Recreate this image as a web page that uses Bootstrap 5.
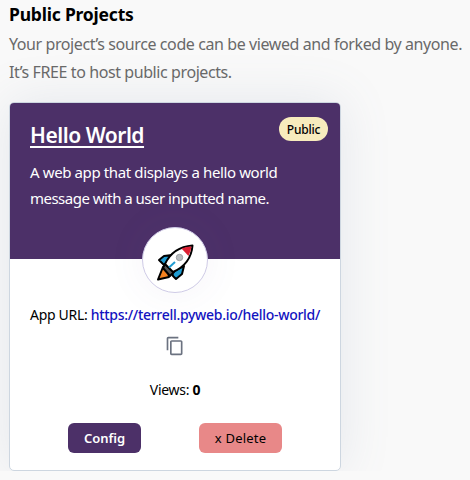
<!DOCTYPE html>
<html lang="en">
<head>
<meta charset="utf-8">
<meta name="viewport" content="width=device-width, initial-scale=1">
<title>Public Projects</title>
<link href="https://cdn.jsdelivr.net/npm/bootstrap@5.3.0/dist/css/bootstrap.min.css" rel="stylesheet">
<style>
body{font-family:"Noto Sans","Open Sans",sans-serif;background:#f9f9f9;color:#000;overflow:hidden}
.page{padding:2px 0 0 9px}
.section-title{font-size:17.5px;line-height:24px;font-weight:700;letter-spacing:-.2px}
.section-text{font-size:16px;line-height:28px;color:#696969;letter-spacing:-.41px;margin-top:4px}
.project{width:332px;height:369px;border:1px solid #cdd6e0;border-radius:5px;margin-top:16px;box-shadow:0 0 50px rgba(110,130,160,.15)}
.project-head{background:#4c3068;height:156px;border-radius:4px 4px 0 0;padding:18px 20px 0}
.project-name{font-size:21px;line-height:28px;font-weight:600;letter-spacing:-.47px;text-decoration-thickness:2px;text-underline-offset:3px}
.project-desc{font-size:15px;line-height:26px;letter-spacing:-.38px;margin-top:10px}
.tight{letter-spacing:-.52px}
.visibility{right:12px;top:14px;width:49px;height:24px;background:#f7ebbd;font-size:12px;font-weight:500;letter-spacing:-.2px;padding-top:1px}
.avatar{width:66px;height:66px;border:1px solid #cfcbe6;margin-top:-32px;padding-top:6px;box-shadow:0 0 40px rgba(100,90,160,.07)}
.info{font-size:14px;line-height:20px;letter-spacing:-.3px}
.app-url{margin-top:12px}
.copy-icon{margin-top:11px}
.views{margin-top:24px}
.info a{color:#1212c0;font-weight:500}
.actions{gap:58px;margin-top:23px}
.action{height:30px;border-radius:6px;font-size:13px;line-height:20px;padding:0;border:0}
.action-config{width:73px;background:#4c3068;color:#fff;font-weight:600}
.action-delete{width:83px;background:#e88888;color:#000;letter-spacing:.2px}
</style>
<script src="https://cdn.jsdelivr.net/npm/bootstrap@5.3.0/dist/js/bootstrap.bundle.min.js"></script>
</head>
<body>
<main class="page text-nowrap">
  <h1 class="section-title mb-0">Public Projects</h1>
  <p class="section-text mb-0">Your project’s source code can be viewed and forked by anyone.<br>It’s FREE to host public projects.</p>
  <article class="project bg-white position-relative">
    <div class="project-head text-white">
      <a href="#" class="project-name d-block text-white">Hello World</a>
      <p class="project-desc mb-0">A web app that displays a hello world<br><span class="tight">message with a user inputted name.</span></p>
      <span class="visibility position-absolute rounded-pill d-flex align-items-center justify-content-center text-black">Public</span>
    </div>
    <div class="d-flex flex-column align-items-center">
      <div class="avatar bg-white rounded-circle d-flex align-items-center justify-content-center">
        <svg width="38" height="38" viewBox="0 0 38 38">
          <g stroke="#000" stroke-width="2" stroke-linejoin="round">
            <path fill="#1f9bd1" d="M16 11 8 12 3 16 6 19 9 22ZM28 22 26 30 20 35 17 32 16 28Z"/>
            <path fill="#f58220" d="M7 23 2 35.500 13 33 12 26Z"/>
            <path fill="#555" d="M7 24 9 20 18 28 14 32Z"/>
            <path fill="#fff" d="M9 20Q17 3 36.500 1.500Q35 20 17 28Z"/>
          </g>
          <path fill="#dc1f33" d="M25.500 4.500Q30 2.600 35.500 2.500Q35 7 32.500 12Z"/>
          <path stroke="#1f9bd1" stroke-width="2" d="m13 23.500 6-5.500"/>
          <circle cx="23.500" cy="13.500" r="3.2" fill="#b9bdc0" stroke="#9a9ea1"/>
        </svg>
      </div>
      <div class="info app-url">App URL: <a href="#" class="text-decoration-none">https://terrell.pyweb.io/hello-world/</a></div>
      <svg class="copy-icon" width="20" height="20" viewBox="0 0 24 24" fill="#6b7280"><path d="M16 1H4C2.900 1 2 1.900 2 3v14h2V3h12V1zm3 4H8C6.900 5 6 5.900 6 7v14c0 1.100.9 2 2 2h11c1.100 0 2-.9 2-2V7c0-1.100-.9-2-2-2zm0 16H8V7h11v14z"/></svg>
      <div class="info views">Views: <b>0</b></div>
      <div class="d-flex actions">
        <button class="btn action action-config">Config</button>
        <button class="btn action action-delete">x Delete</button>
      </div>
    </div>
  </article>
</main>
</body>
</html>
